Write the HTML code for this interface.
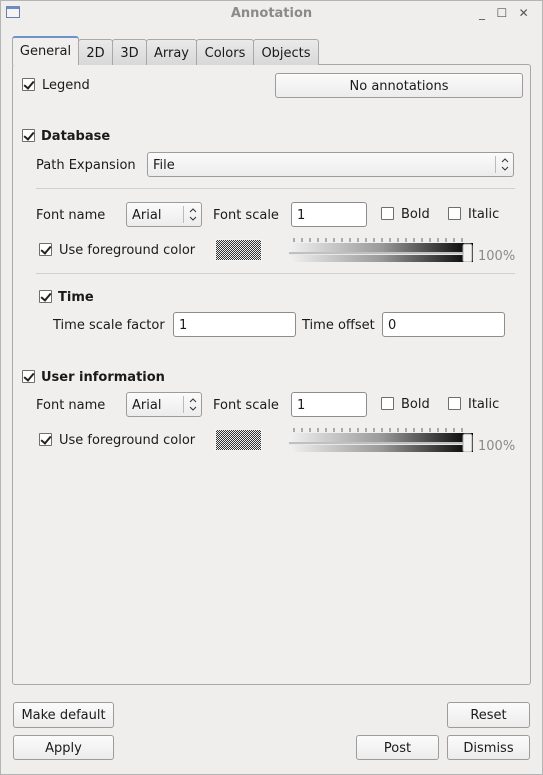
<!DOCTYPE html>
<html><head><style>
*{box-sizing:border-box}
body{margin:0;width:543px;height:775px;overflow:hidden;background:#efeeec;font-family:"DejaVu Sans","Liberation Sans",sans-serif;font-size:13px;color:#1a1a1a;position:relative}
.a{position:absolute;white-space:nowrap}
.win{position:absolute;left:0;top:0;width:543px;height:775px;border:1px solid #b4b4b4}
.cb{position:absolute;width:13px;height:13px;border:1px solid #6e6e6e;background:#fff;border-radius:1px}
.cb.on::after{content:"";position:absolute;left:3px;top:0px;width:4px;height:8px;border:solid #222;border-width:0 2px 2px 0;transform:rotate(40deg)}
.btn{position:absolute;border:1px solid #9c9c9c;border-radius:3px;background:linear-gradient(#fbfbfb,#ececec);text-align:center;line-height:25px}
.inp{position:absolute;border:1px solid #8d8d8d;border-radius:3px;background:#fff;padding-left:5px;line-height:25px}
.combo{position:absolute;border:1px solid #9c9c9c;border-radius:3px;background:linear-gradient(#fbfbfb,#ececec);padding-left:5px;line-height:25px}
.combo .ar{position:absolute;right:0;top:3px;width:18px;height:17px;border-left:1px solid #bbb}
.sep{position:absolute;height:1px;background:#cfcfcf}
.tab{position:absolute;top:39px;height:26px;border:1px solid #a8a8a8;border-bottom:none;background:linear-gradient(#eaeaea,#d8d8d8);text-align:center;line-height:27px;border-radius:3px 3px 0 0}
.sw{position:absolute;width:47px;height:22px;background:repeating-conic-gradient(#333 0 25%,#eee 0 50%) 0 0/2px 2px;border:1px solid #f4f4f4}
.sl{position:absolute;width:185px;height:26px}
.b{font-weight:bold}
</style></head><body>
<div class="win"></div>
<div class="a" style="left:6px;top:6px;width:14px;height:12px;border:1px solid #6a7fa0;border-top:3px solid #6a8cc0;background:#f4f4f4"></div>
<div class="a b" style="left:0;width:543px;text-align:center;top:6px;color:#8a8a8a">Annotation</div>
<div class="a" style="left:479px;top:6px;color:#555;font-size:12px">_&nbsp;&nbsp;&nbsp;☐&nbsp;&nbsp;&nbsp;✕</div>

<div class="a" style="left:12px;top:64px;width:519px;height:621px;border:1px solid #a8a8a8;border-radius:3px;background:#f0efed"></div>
<div class="tab" style="left:78px;width:35px">2D</div>
<div class="tab" style="left:112px;width:35px">3D</div>
<div class="tab" style="left:146px;width:51px">Array</div>
<div class="tab" style="left:196px;width:58px">Colors</div>
<div class="tab" style="left:253px;width:66px">Objects</div>
<div class="tab" style="left:12px;top:36px;width:67px;height:29px;background:#f0efed;border-top:2px solid #6d93c9">General</div>

<div class="cb on" style="left:22px;top:78px"></div><div class="a" style="left:42px;top:78px">Legend</div>
<div class="btn" style="left:275px;top:73px;width:248px;height:25px">No annotations</div>

<div class="cb on" style="left:22px;top:129px"></div><div class="a b" style="left:41px;top:129px">Database</div>
<div class="a" style="left:36px;top:158px">Path Expansion</div>
<div class="combo" style="left:147px;top:152px;width:367px;height:25px">File<svg class="ar" width="18" height="17"><path d="M6 6l3-3 3 3M6 11l3 3 3-3" fill="none" stroke="#333"/></svg></div>
<div class="sep" style="left:36px;top:188px;width:479px"></div>

<div class="a" style="left:36px;top:208px">Font name</div>
<div class="combo" style="left:126px;top:202px;width:76px;height:25px">Arial<svg class="ar" width="18" height="17"><path d="M6 6l3-3 3 3M6 11l3 3 3-3" fill="none" stroke="#333"/></svg></div>
<div class="a" style="left:213px;top:208px">Font scale</div>
<div class="inp" style="left:291px;top:202px;width:76px;height:25px">1</div>
<div class="cb" style="left:381px;top:207px"></div><div class="a" style="left:401px;top:207px">Bold</div>
<div class="cb" style="left:448px;top:207px"></div><div class="a" style="left:468px;top:207px">Italic</div>

<div class="cb on" style="left:39px;top:243px"></div><div class="a" style="left:59px;top:243px">Use foreground color</div>
<div class="sw" style="left:215px;top:239px"></div>
<svg class="sl" style="left:289px;top:236px" width="185" height="27">
<defs><linearGradient id="g"><stop offset="0" stop-color="#f0f0f0"/><stop offset=".5" stop-color="#999"/><stop offset="1" stop-color="#000"/></linearGradient></defs>
<g stroke="#666"><path d="M5 2v4M13 2v4M21 2v4M29 2v4M37 2v4M45 2v4M53 2v4M61 2v4M69 2v4M77 2v4M85 2v4M93 2v4M101 2v4M109 2v4M117 2v4M125 2v4M133 2v4M141 2v4M149 2v4M157 2v4M165 2v4M173 2v4"/></g>
<rect x="1" y="7" width="183" height="19" fill="url(#g)"/>
<rect x="0" y="16" width="176" height="3" fill="#e8e8e8"/><line x1="0" y1="17" x2="176" y2="17" stroke="#999"/>
<rect x="174" y="8" width="9" height="18" rx="2" fill="#f2f2f2" stroke="#aaa"/>
</svg>
<div class="a" style="left:478px;top:249px;color:#8a8a8a">100%</div>
<div class="sep" style="left:36px;top:273px;width:479px"></div>

<div class="cb on" style="left:39px;top:290px"></div><div class="a b" style="left:58px;top:290px">Time</div>
<div class="a" style="left:53px;top:318px">Time scale factor</div>
<div class="inp" style="left:173px;top:312px;width:123px;height:25px">1</div>
<div class="a" style="left:302px;top:318px">Time offset</div>
<div class="inp" style="left:382px;top:312px;width:123px;height:25px">0</div>

<div class="cb on" style="left:22px;top:370px"></div><div class="a b" style="left:41px;top:370px">User information</div>
<div class="a" style="left:36px;top:398px">Font name</div>
<div class="combo" style="left:126px;top:392px;width:76px;height:25px">Arial<svg class="ar" width="18" height="17"><path d="M6 6l3-3 3 3M6 11l3 3 3-3" fill="none" stroke="#333"/></svg></div>
<div class="a" style="left:213px;top:398px">Font scale</div>
<div class="inp" style="left:291px;top:392px;width:76px;height:25px">1</div>
<div class="cb" style="left:381px;top:397px"></div><div class="a" style="left:401px;top:397px">Bold</div>
<div class="cb" style="left:448px;top:397px"></div><div class="a" style="left:468px;top:397px">Italic</div>
<div class="cb on" style="left:39px;top:433px"></div><div class="a" style="left:59px;top:433px">Use foreground color</div>
<div class="sw" style="left:215px;top:429px"></div>
<svg class="sl" style="left:289px;top:426px" width="185" height="27">
<g stroke="#666"><path d="M5 2v4M13 2v4M21 2v4M29 2v4M37 2v4M45 2v4M53 2v4M61 2v4M69 2v4M77 2v4M85 2v4M93 2v4M101 2v4M109 2v4M117 2v4M125 2v4M133 2v4M141 2v4M149 2v4M157 2v4M165 2v4M173 2v4"/></g>
<rect x="1" y="7" width="183" height="19" fill="url(#g)"/>
<rect x="0" y="16" width="176" height="3" fill="#e8e8e8"/><line x1="0" y1="17" x2="176" y2="17" stroke="#999"/>
<rect x="174" y="8" width="9" height="18" rx="2" fill="#f2f2f2" stroke="#aaa"/>
</svg>
<div class="a" style="left:478px;top:439px;color:#8a8a8a">100%</div>

<div class="btn" style="left:13px;top:702px;width:101px;height:26px">Make default</div>
<div class="btn" style="left:447px;top:702px;width:83px;height:26px">Reset</div>
<div class="btn" style="left:13px;top:735px;width:101px;height:25px">Apply</div>
<div class="btn" style="left:356px;top:735px;width:83px;height:25px">Post</div>
<div class="btn" style="left:447px;top:735px;width:83px;height:25px">Dismiss</div>
</body></html>
